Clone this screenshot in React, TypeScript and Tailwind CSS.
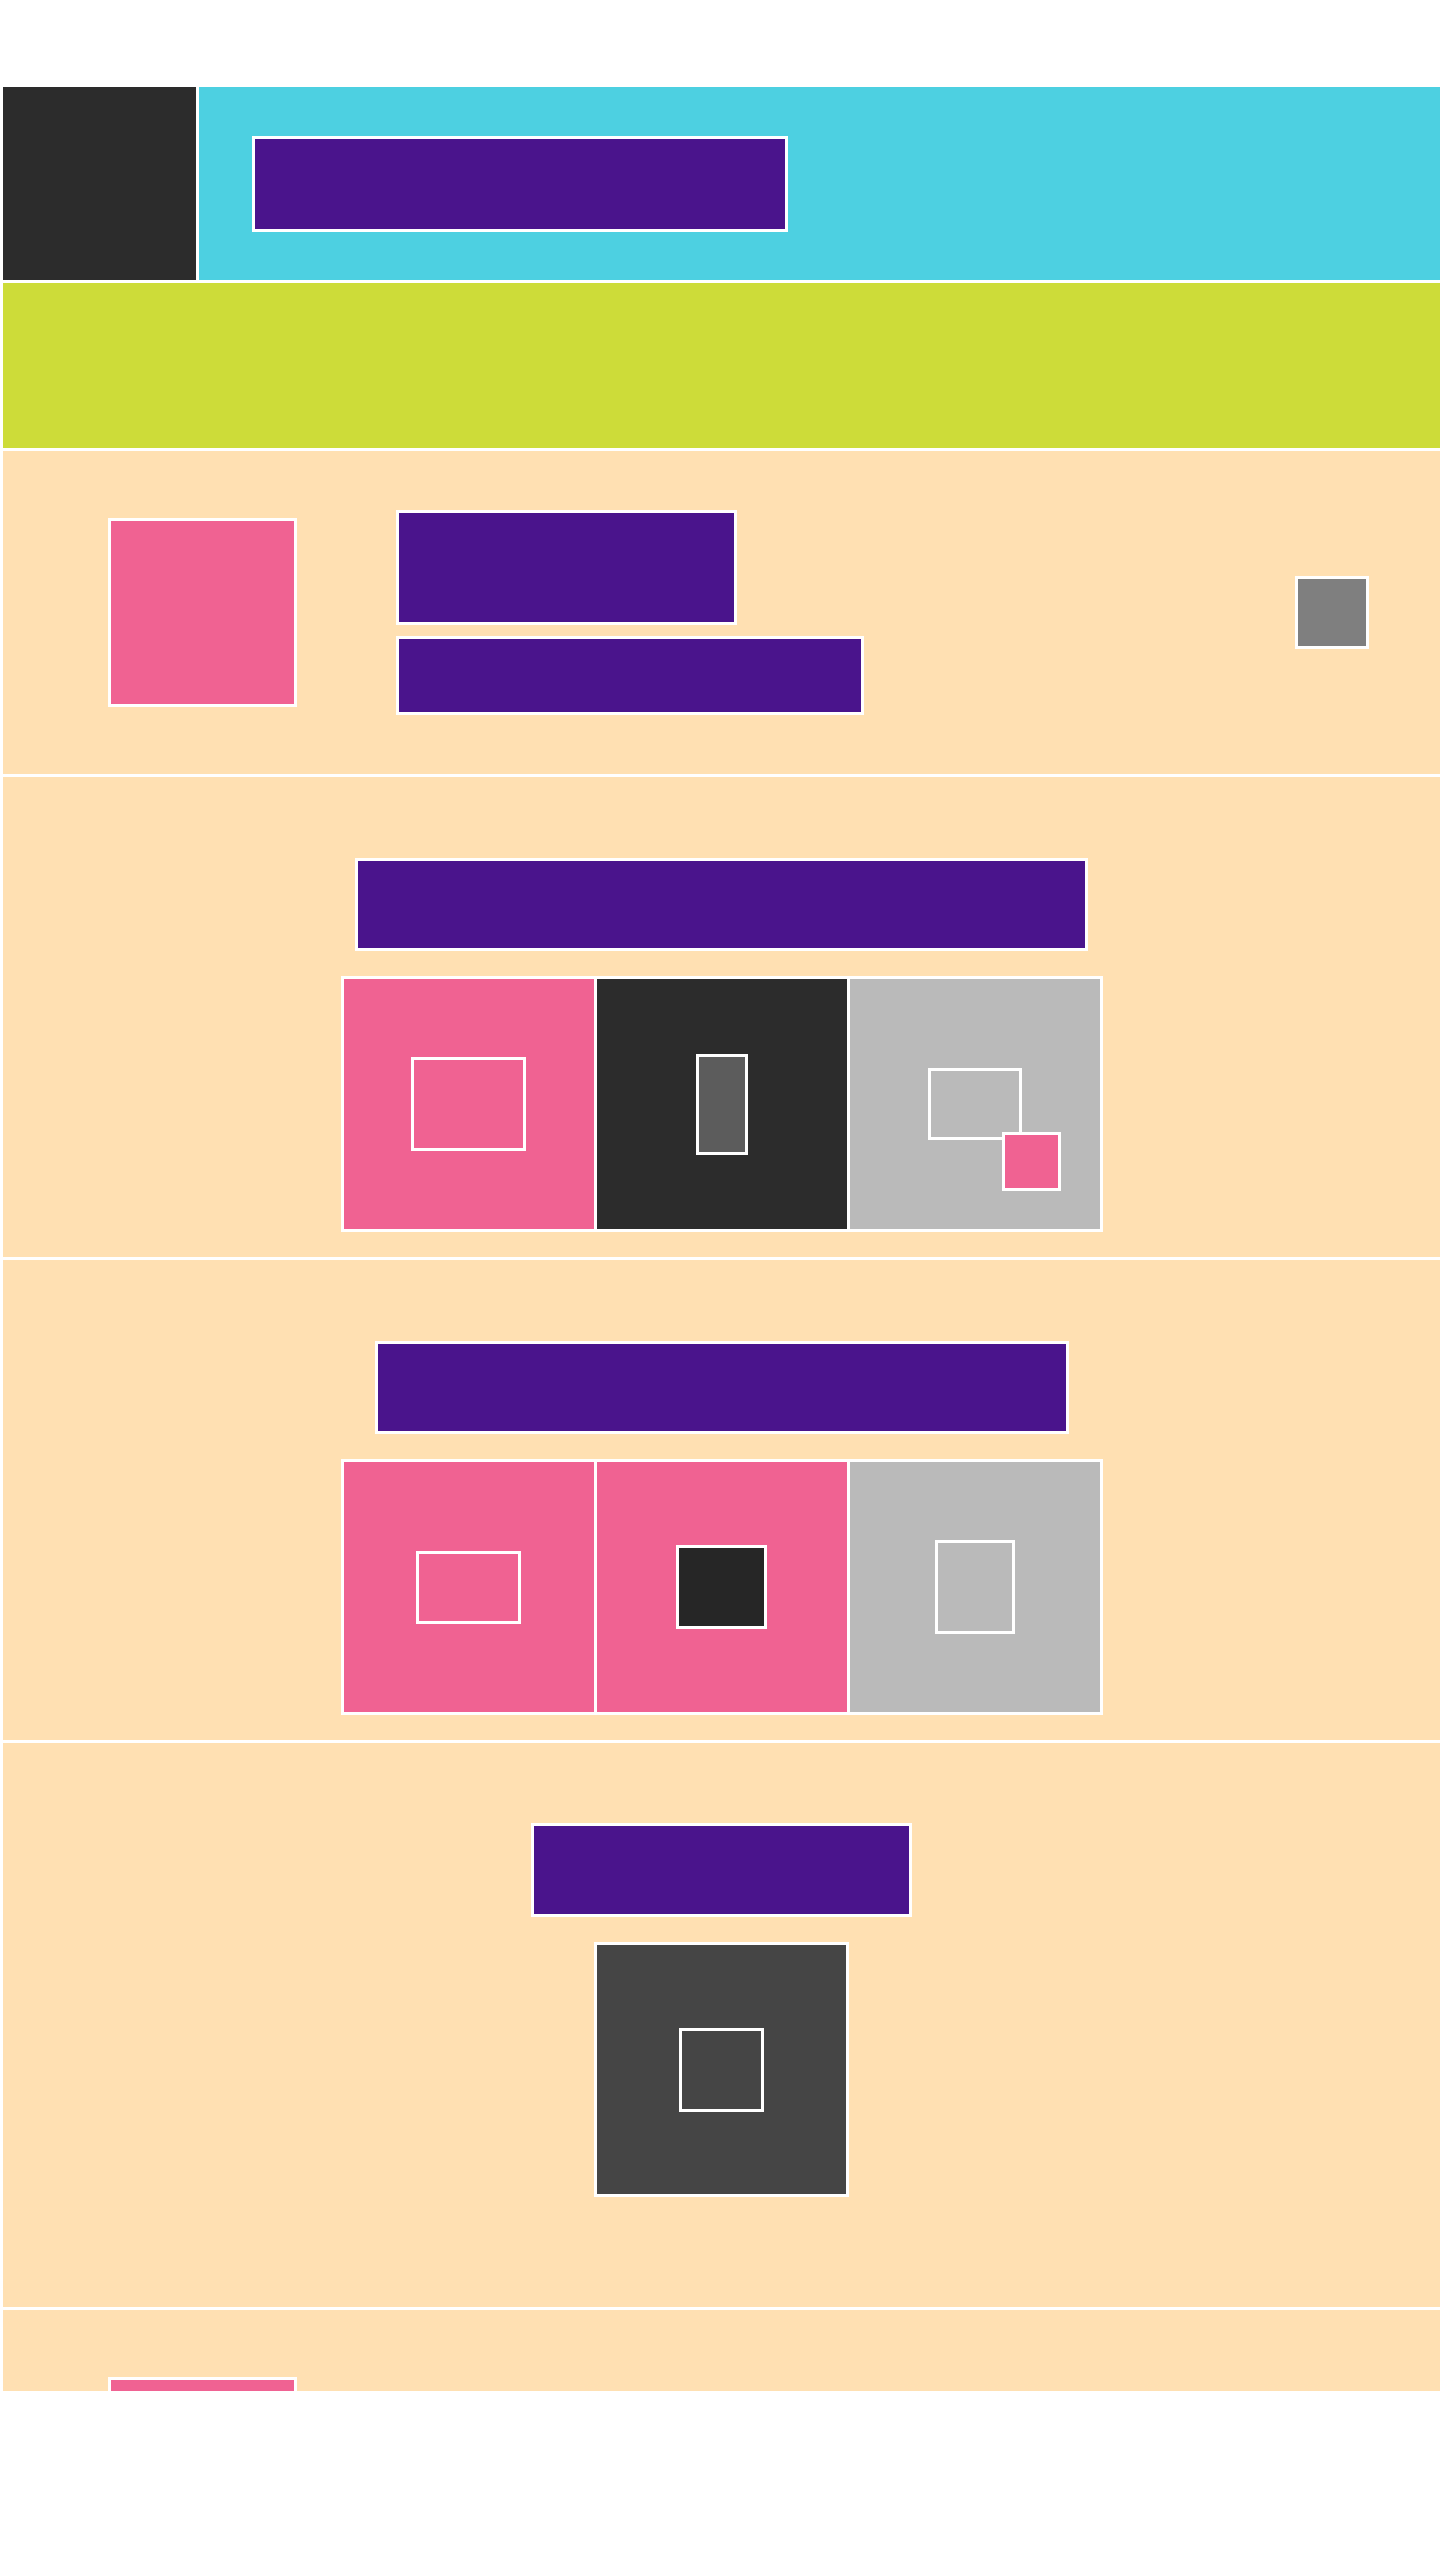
const box = 'border-[3px] border-white'

function Panel({ bg, children }: { bg: string; children?: React.ReactNode }) {
  return <div className={`flex h-[250px] w-[250px] items-center justify-center ${bg}`}>{children}</div>
}

function ProfileRow({ full = true }: { full?: boolean }) {
  return (
    <div className="flex h-[323px] items-center bg-[#ffe0b2] pl-[105px]">
      <div className={`h-[189px] w-[189px] bg-[#f06292] ${box}`} />
      {full && (
        <>
          <div className="ml-[99px] flex flex-col gap-[11px]">
            <div className={`h-[115px] w-[341px] bg-[#4a148c] ${box}`} />
            <div className={`h-[79px] w-[468px] bg-[#4a148c] ${box}`} />
          </div>
          <div className={`ml-auto mr-[71px] h-[73px] w-[74px] bg-[#7f7f7f] ${box}`} />
        </>
      )}
    </div>
  )
}

export default function App() {
  return (
    <div className="h-[2391px] overflow-hidden bg-white pl-[3px] pt-[87px]">
      <div className="flex flex-col gap-[3px]">
        {/* header */}
        <div className="flex h-[193px] gap-[3px]">
          <div className="w-[193px] bg-[#2c2c2c]" />
          <div className="flex flex-1 items-center bg-[#4dd0e1] pl-[53px]">
            <div className={`h-[96px] w-[536px] bg-[#4a148c] ${box}`} />
          </div>
        </div>

        {/* banner */}
        <div className="h-[165px] bg-[#cddc39]" />

        <ProfileRow />

        {/* group one */}
        <div className="flex h-[480px] flex-col items-center gap-[25px] bg-[#ffe0b2] pt-[81px]">
          <div className={`h-[93px] w-[733px] bg-[#4a148c] ${box}`} />
          <div className="flex gap-[3px] bg-white p-[3px]">
            <Panel bg="bg-[#f06292]">
              <div className={`h-[94px] w-[115px] ${box}`} />
            </Panel>
            <Panel bg="bg-[#2c2c2c]">
              <div className={`h-[101px] w-[52px] bg-[#5c5c5c] ${box}`} />
            </Panel>
            <Panel bg="bg-[#bababa]">
              <div className={`relative h-[72px] w-[94px] ${box}`}>
                <div className={`absolute left-[71px] top-[61px] h-[59px] w-[59px] bg-[#f06292] ${box}`} />
              </div>
            </Panel>
          </div>
        </div>

        {/* group two */}
        <div className="flex h-[480px] flex-col items-center gap-[25px] bg-[#ffe0b2] pt-[81px]">
          <div className={`h-[93px] w-[694px] bg-[#4a148c] ${box}`} />
          <div className="flex gap-[3px] bg-white p-[3px]">
            <Panel bg="bg-[#f06292]">
              <div className={`h-[73px] w-[105px] ${box}`} />
            </Panel>
            <Panel bg="bg-[#f06292]">
              <div className={`h-[84px] w-[91px] bg-[#262626] ${box}`} />
            </Panel>
            <Panel bg="bg-[#bababa]">
              <div className={`h-[94px] w-[80px] ${box}`} />
            </Panel>
          </div>
        </div>

        {/* group three */}
        <div className="flex h-[564px] flex-col items-center gap-[25px] bg-[#ffe0b2] pt-[80px]">
          <div className={`h-[94px] w-[381px] bg-[#4a148c] ${box}`} />
          <div className={`flex h-[255px] w-[255px] items-center justify-center bg-[#454545] ${box}`}>
            <div className={`h-[84px] w-[85px] ${box}`} />
          </div>
        </div>

        <ProfileRow full={false} />
      </div>
    </div>
  )
}
